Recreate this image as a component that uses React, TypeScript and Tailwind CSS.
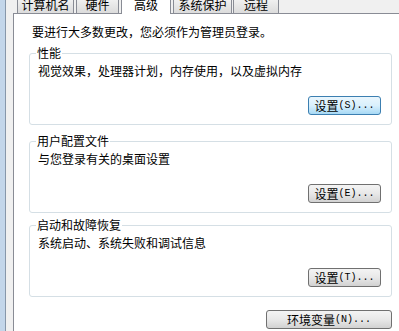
import type { ReactNode } from 'react';

const font = { fontFamily: '"Noto Sans CJK SC", "Noto Sans", sans-serif' };

function Tab({ label, className }: { label: string; className: string }) {
  return (
    <div
      className={`flex h-[16px] items-start justify-center border border-b-0 border-[#898c95] bg-gradient-to-b from-[#f3f3f3] to-[#dcdcdc] text-[12px] leading-[14px] text-black ${className}`}
    >
      {label}
    </div>
  );
}

function Btn({ label, hotkey, focused, className }: { label: string; hotkey: string; focused?: boolean; className: string }) {
  return (
    <div
      className={`flex h-[19px] items-center justify-center rounded-[3px] border text-[12px] leading-[14px] text-black ${
        focused
          ? 'border-[#3c7fb1] bg-gradient-to-b from-[#eaf6fd] via-[#d9f0fc] to-[#a7d9f5]'
          : 'border-[#707070] bg-gradient-to-b from-[#f4f4f4] via-[#e8e8e8] to-[#d2d2d2]'
      } ${className}`}
    >
      <span>{label}</span>
      <span className="text-[10px]" style={{ fontFamily: '"Liberation Mono", monospace' }}>
        ({hotkey})...
      </span>
    </div>
  );
}

function GroupBox({ title, desc, children, className }: { title: string; desc: string; children: ReactNode; className: string }) {
  return (
    <div className={`relative flex h-[72px] w-[363px] flex-col rounded-[3px] border border-[#d5dfe5] pb-[9px] pl-[8px] pt-[9px] ${className}`}>
      <span className="absolute -top-[9px] left-[6px] bg-white px-[1px] text-[12px] leading-[16px]">{title}</span>
      <p className="text-[12px] leading-[16px]">{desc}</p>
      {children}
    </div>
  );
}

export default function App() {
  return (
    <div className="flex h-[331px] w-[399px] overflow-hidden bg-[#f0f0f0] text-black" style={font}>
      <div className="w-[5px] bg-[#c3d6ea]" />
      <div className="w-px bg-[#8797aa]" />
      <div className="flex flex-1 flex-col pl-[7px]">
        {/* tabs */}
        <div className="relative z-10 flex h-[13px] items-end pl-[4px]">
          <Tab label="计算机名" className="w-[57px]" />
          <Tab label="硬件" className="ml-[2px] w-[43px]" />
          <div className="-mb-px ml-[2px] flex h-[18px] w-[50px] items-start justify-center border border-b-0 border-[#898c95] bg-white pt-[1px] text-[12px] leading-[14px]">
            高级
          </div>
          <Tab label="系统保护" className="ml-[2px] w-[59px]" />
          <Tab label="远程" className="ml-px w-[46px]" />
        </div>

        {/* panel */}
        <div className="flex flex-1 flex-col border-l border-t border-[#898c95] bg-white pl-[15px] pt-[10px]">
          <p className="pl-[3px] text-[12px] leading-[16px]">要进行大多数更改，您必须作为管理员登录。</p>

          <GroupBox title="性能" desc="视觉效果，处理器计划，内存使用，以及虚拟内存" className="mt-[13px]">
            <Btn label="设置" hotkey="S" focused className="mr-[10px] mt-auto w-[73px] self-end" />
          </GroupBox>

          <GroupBox title="用户配置文件" desc="与您登录有关的桌面设置" className="mt-[16px]">
            <Btn label="设置" hotkey="E" className="mr-[10px] mt-auto w-[73px] self-end" />
          </GroupBox>

          <GroupBox title="启动和故障恢复" desc="系统启动、系统失败和调试信息" className="mt-[12px]">
            <Btn label="设置" hotkey="T" className="mr-[10px] mt-auto w-[73px] self-end" />
          </GroupBox>

          <div className="mt-[13px] flex w-[363px] justify-end">
            <Btn label="环境变量" hotkey="N" className="w-[126px]" />
          </div>
        </div>
      </div>
    </div>
  );
}
